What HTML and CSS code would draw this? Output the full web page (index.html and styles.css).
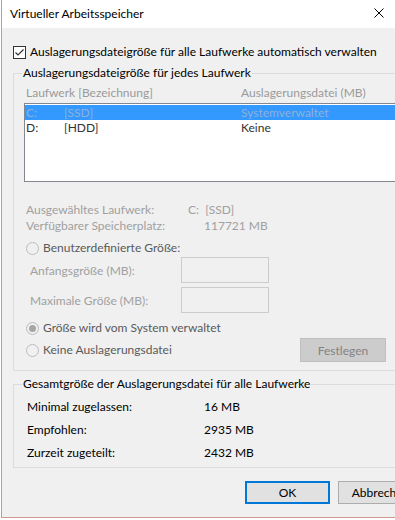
FILE: index.html
```html
<!DOCTYPE html>
<html lang="de">
<head>
    <meta charset="UTF-8">
    <title>Virtueller Arbeitsspeicher</title>
    <link rel="stylesheet" href="styles.css">
</head>
<body>
    <div class="window">
        <div class="titlebar">
            <span class="title">Virtueller Arbeitsspeicher</span>
            <span class="close">
                <svg width="10" height="10" viewBox="0 0 10 10"><path d="M0.5 0.5 L9.5 9.5 M9.5 0.5 L0.5 9.5" stroke="#000" stroke-width="1" fill="none"/></svg>
            </span>
        </div>

        <div class="content">
            <label class="auto">
                <svg class="checkbox" width="13" height="13" viewBox="0 0 13 13">
                    <rect x="0.5" y="0.5" width="12" height="12" fill="#fff" stroke="#333"/>
                    <path d="M2.5 6.5 L5 9 L10.5 3.5" stroke="#333" stroke-width="1.2" fill="none"/>
                </svg>
                Auslagerungsdateigröße für alle Laufwerke automatisch verwalten
            </label>

            <fieldset class="group drives">
                <legend>Auslagerungsdateigröße für jedes Laufwerk</legend>

                <div class="list-head">
                    <span>Laufwerk [Bezeichnung]</span>
                    <span>Auslagerungsdatei (MB)</span>
                </div>
                <div class="listbox">
                    <div class="list-row selected">
                        <span>C:</span><span>[SSD]</span><span>Systemverwaltet</span>
                    </div>
                    <div class="list-row">
                        <span>D:</span><span>[HDD]</span><span>Keine</span>
                    </div>
                </div>

                <div class="info">
                    <span>Ausgewähltes Laufwerk:</span><span>C:&nbsp; [SSD]</span>
                    <span>Verfügbarer Speicherplatz:</span><span class="space">117721 MB</span>
                </div>

                <div class="radio custom"><span class="dot"></span>Benutzerdefinierte Größe:</div>
                <div class="size-row first">
                    <span class="size-label">Anfangsgröße (MB):</span>
                    <span class="size-input"></span>
                </div>
                <div class="size-row">
                    <span class="size-label">Maximale Größe (MB):</span>
                    <span class="size-input"></span>
                </div>

                <div class="radio system"><span class="dot checked"></span>Größe wird vom System verwaltet</div>
                <div class="set-row">
                    <div class="radio"><span class="dot"></span>Keine Auslagerungsdatei</div>
                    <button class="btn disabled">Festlegen</button>
                </div>
            </fieldset>

            <fieldset class="group total">
                <legend>Gesamtgröße der Auslagerungsdatei für alle Laufwerke</legend>
                <div class="totals">
                    <span>Minimal zugelassen:</span><span>16 MB</span>
                    <span>Empfohlen:</span><span>2935 MB</span>
                    <span>Zurzeit zugeteilt:</span><span>2432 MB</span>
                </div>
            </fieldset>

            <div class="buttons">
                <button class="btn default">OK</button>
                <button class="btn">Abbrechen</button>
            </div>
        </div>
    </div>
</body>
</html>
```
FILE: styles.css
```css
* {
    box-sizing: border-box;
}

body {
    margin: 0;
    background-color: #fff;
    font-family: Lato, "Noto Sans", sans-serif;
    font-size: 12px;
    line-height: 14px;
    color: #000;
    overflow: hidden;
}

.window {
    margin-left: 1px;
    width: 440px;
    height: 518px;
    background-color: #f0f0f0;
    border-left: 1px solid #cf968f;
    border-bottom: 1px solid #cf968f;
}

.titlebar {
    height: 28px;
    background-color: #fff;
    display: flex;
    align-items: center;
    padding-left: 8px;
    padding-right: 39px;
}

.close {
    margin-left: auto;
    width: 46px;
    height: 28px;
    display: flex;
    align-items: center;
    justify-content: center;
    padding-bottom: 2px;
}

.content {
    padding-left: 11px;
}

.auto {
    display: flex;
    align-items: center;
    gap: 4px;
    margin-top: 17px;
    height: 14px;
}

.checkbox {
    flex: none;
}

.group {
    margin: 0;
    border: 1px solid #dcdcdc;
    border-right: none;
    padding: 0 0 0 10px;
}

.group legend {
    padding: 0 1px;
    margin-left: -2px;
    line-height: 14px;
}

.drives {
    margin-top: 7px;
    padding-top: 6px;
    padding-bottom: 8px;
}

.list-head {
    display: grid;
    grid-template-columns: 215px auto;
    padding-left: 2px;
    color: #9a9a9a;
}

.listbox {
    margin-top: 3px;
    height: 79px;
    border: 1px solid #828790;
    border-right: none;
    background-color: #fff;
    padding: 1px 0;
}

.list-row {
    display: grid;
    grid-template-columns: 38px 177px auto;
    padding-left: 1px;
    line-height: 15px;
    color: #333;
}

.list-row.selected {
    background-color: #3399ff;
    color: #8fb0d6;
}

.info {
    display: grid;
    grid-template-columns: 162px auto;
    margin-top: 20px;
    padding-left: 2px;
    line-height: 16px;
    color: #a0a0a0;
}

.info .space {
    padding-left: 16px;
}

.radio {
    display: flex;
    align-items: center;
    gap: 4px;
    padding-left: 2px;
    color: #5a5a5a;
}

.dot {
    width: 13px;
    height: 13px;
    border: 1px solid #bcbcbc;
    border-radius: 50%;
    background-color: #f0f0f0;
    display: flex;
    align-items: center;
    justify-content: center;
}

.dot.checked::after {
    content: "";
    width: 7px;
    height: 7px;
    border-radius: 50%;
    background-color: #a6a6a6;
}

.custom {
    margin-top: 7px;
}

.size-row {
    display: flex;
    align-items: center;
    margin-top: 4px;
    color: #a0a0a0;
}

.size-row.first {
    margin-top: 2px;
}

.size-label {
    width: 157px;
    padding-left: 6px;
    padding-top: 1px;
}

.size-input {
    width: 88px;
    height: 26px;
    border: 1px solid #cccccc;
    background-color: #f0f0f0;
}

.system {
    margin-top: 8px;
}

.set-row {
    display: flex;
    align-items: center;
    justify-content: space-between;
    width: 362px;
    margin-top: 3px;
}

.btn {
    width: 85px;
    height: 23px;
    font-family: inherit;
    font-size: 12px;
    color: #000;
    background-color: #e1e1e1;
    border: 1px solid #adadad;
    padding: 0;
}

.btn.disabled {
    width: 86px;
    height: 24px;
    color: #838383;
    background-color: #cccccc;
    border-color: #bfbfbf;
}

.btn.default {
    border: 2px solid #0078d7;
}

.total {
    margin-top: 6px;
    padding-top: 4px;
    padding-bottom: 3px;
}

.total legend {
    color: #000;
}

.totals {
    display: grid;
    grid-template-columns: 177px auto;
    padding-left: 3px;
    line-height: 23px;
}

.buttons {
    display: flex;
    gap: 8px;
    margin-top: 13px;
    margin-left: 232px;
}
```
